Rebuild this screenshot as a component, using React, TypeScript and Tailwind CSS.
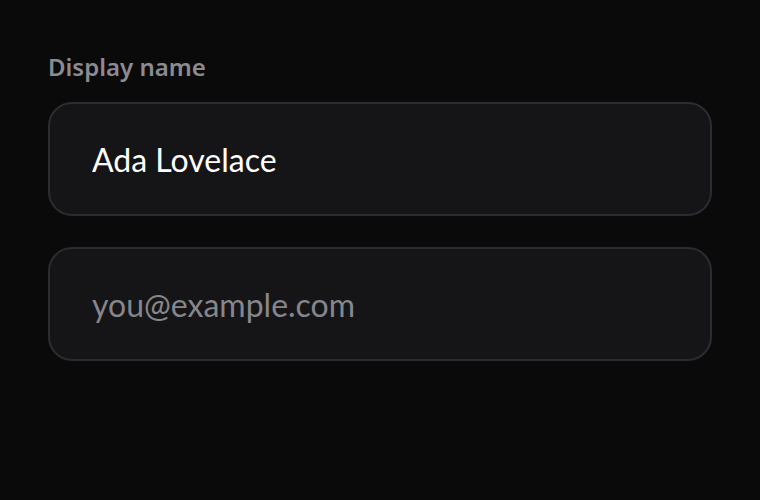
import React from "react";

export default function App() {
  return (
    <div className="w-[760px] h-[500px] bg-[#0a0a0b] pt-[51px] px-[48px] font-['Noto_Sans','Open_Sans',sans-serif]">
      <label className="block text-[24px] leading-[32px] font-semibold text-[#8b8b90]">Display name</label>
      <div className="mt-[19px] flex flex-col gap-[31px] w-[664px]">
        <input
          readOnly
          value="Ada Lovelace"
          className="h-[114px] w-full rounded-[24px] border-2 border-[#2c2c30] bg-[#151517] px-[42px] font-['Lato','Noto_Sans',sans-serif] text-[32px] text-white outline-none"
        />
        <input
          readOnly
          placeholder="you@example.com"
          className="h-[114px] w-full rounded-[24px] border-2 border-[#2c2c30] bg-[#151517] px-[42px] font-['Lato','Noto_Sans',sans-serif] text-[32px] text-white placeholder:text-[#86868b] outline-none"
        />
      </div>
    </div>
  );
}
